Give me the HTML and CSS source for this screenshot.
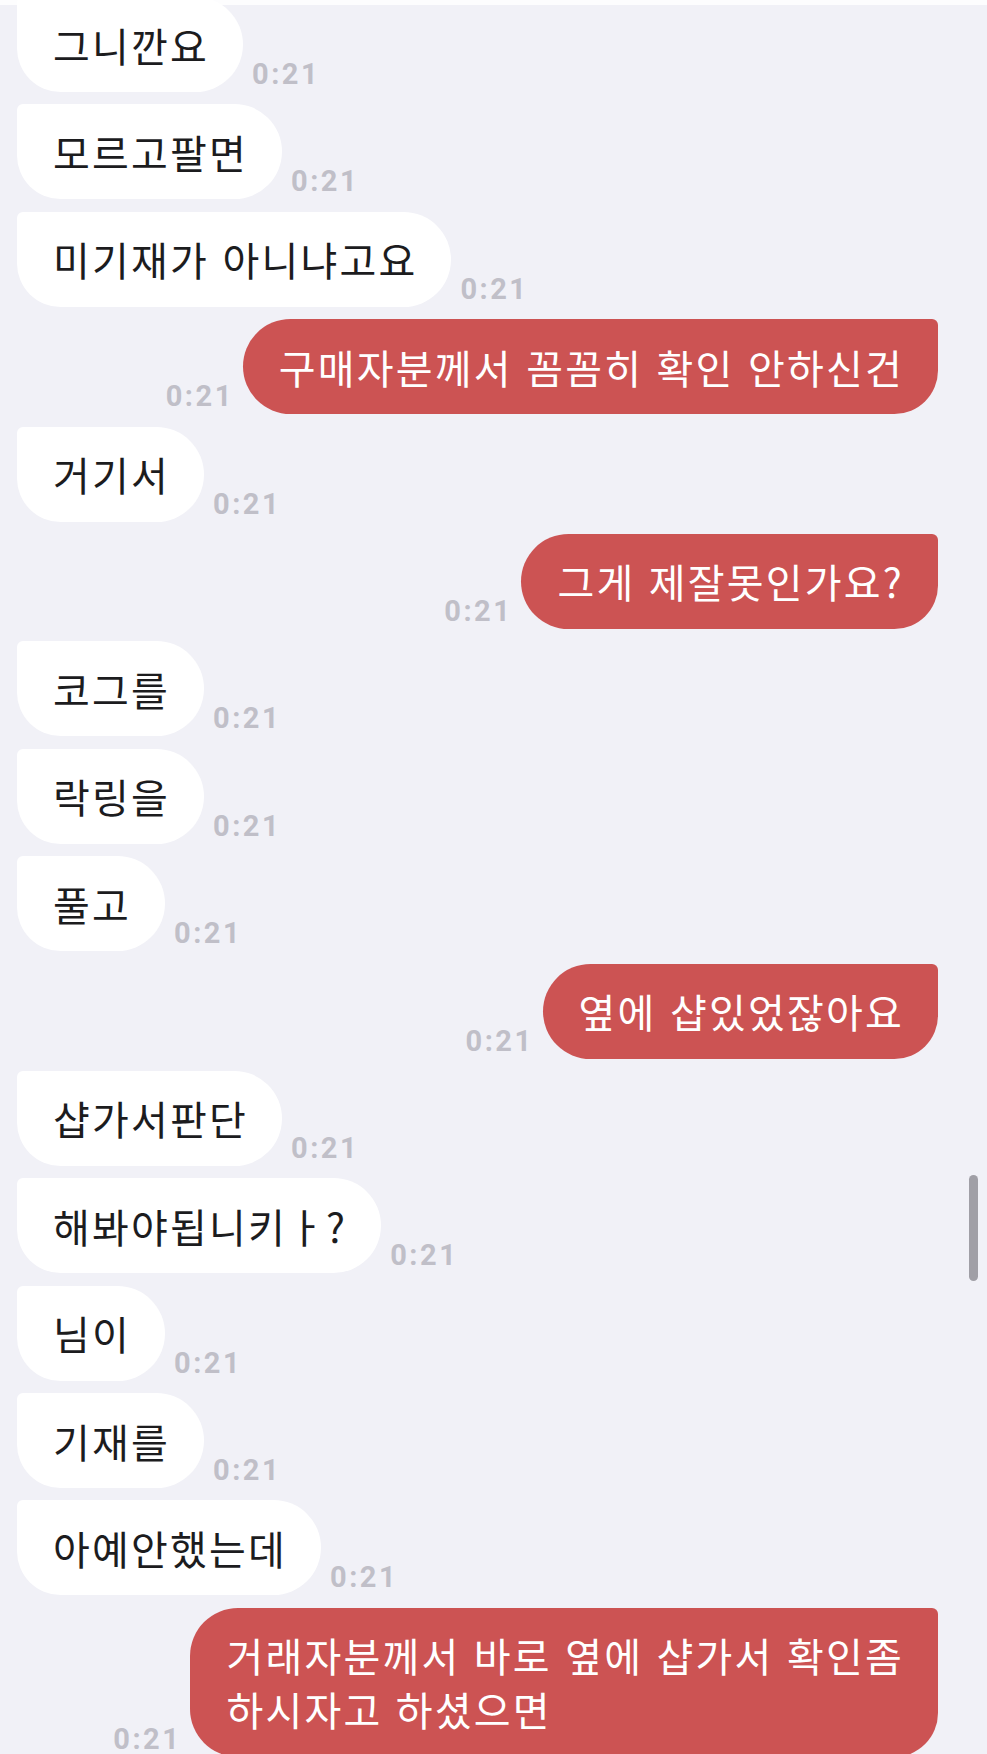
FILE: index.html
```html
<!DOCTYPE html>
<html lang="ko">
<head>
    <meta charset="UTF-8">
    <meta name="viewport" content="width=device-width, initial-scale=1.0">
    <title>채팅</title>
    <link rel="stylesheet" href="styles.css">
</head>
<body>
    <div class="screen">
        <div class="top-edge"></div>

        <!-- Chat messages -->
        <div class="chat">
            <div class="row in"><div class="bubble">그니깐요</div><span class="time">0:21</span></div>
            <div class="row in"><div class="bubble">모르고팔면</div><span class="time">0:21</span></div>
            <div class="row in"><div class="bubble">미기재가 아니냐고요</div><span class="time">0:21</span></div>
            <div class="row out"><span class="time">0:21</span><div class="bubble">구매자분께서 꼼꼼히 확인 안하신건</div></div>
            <div class="row in"><div class="bubble">거기서</div><span class="time">0:21</span></div>
            <div class="row out"><span class="time">0:21</span><div class="bubble">그게 제잘못인가요?</div></div>
            <div class="row in"><div class="bubble">코그를</div><span class="time">0:21</span></div>
            <div class="row in"><div class="bubble">락링을</div><span class="time">0:21</span></div>
            <div class="row in"><div class="bubble">풀고</div><span class="time">0:21</span></div>
            <div class="row out"><span class="time">0:21</span><div class="bubble">옆에 샵있었잖아요</div></div>
            <div class="row in"><div class="bubble">샵가서판단</div><span class="time">0:21</span></div>
            <div class="row in"><div class="bubble">해봐야됩니키ㅏ?</div><span class="time">0:21</span></div>
            <div class="row in"><div class="bubble">님이</div><span class="time">0:21</span></div>
            <div class="row in"><div class="bubble">기재를</div><span class="time">0:21</span></div>
            <div class="row in"><div class="bubble">아예안했는데</div><span class="time">0:21</span></div>
            <div class="row out"><span class="time">0:21</span><div class="bubble">거래자분께서 바로 옆에 샵가서 확인좀<br>하시자고 하셨으면</div></div>
        </div>

        <!-- Scroll indicator -->
        <div class="scrollbar"></div>
    </div>
</body>
</html>
```

FILE: styles.css
```css
/* Global styles */
body {
    margin: 0;
    padding: 0;
    background: #f1f1f7;
    font-family: "Noto Sans CJK KR", "Noto Sans", sans-serif;
}

.screen {
    position: relative;
    height: 1754px;
    overflow: hidden;
}

.top-edge {
    height: 5px;
    background: #fdfdfe;
}

/* Message list */
.chat {
    display: flex;
    flex-direction: column;
    gap: 12.4px;
    margin-top: -8px;
    padding: 0 49px 0 17px;
}

.row {
    display: flex;
    align-items: flex-end;
    gap: 9px;
}

.row.out {
    justify-content: flex-end;
}

.bubble {
    padding: 20.5px 34px 20.5px 36px;
    font-size: 40px;
    line-height: 54px;
    letter-spacing: 2.2px;
    white-space: nowrap;
}

.in .bubble {
    background: #ffffff;
    color: #1c1c1e;
    border-radius: 6px 48px 48px 44px;
}

.out .bubble {
    background: #cc5353;
    color: #ffffff;
    border-radius: 48px 6px 44px 48px;
}

/* Timestamps */
.time {
    flex-shrink: 0;
    padding-bottom: 3px;
    font-family: Roboto, "Liberation Sans", sans-serif;
    font-weight: 700;
    font-size: 29px;
    line-height: 29px;
    letter-spacing: 2.5px;
    color: #c0bfc8;
}

/* Scroll indicator */
.scrollbar {
    position: absolute;
    left: 969px;
    top: 1175px;
    width: 9px;
    height: 106px;
    border-radius: 5px;
    background: #a09fa6;
}
```
